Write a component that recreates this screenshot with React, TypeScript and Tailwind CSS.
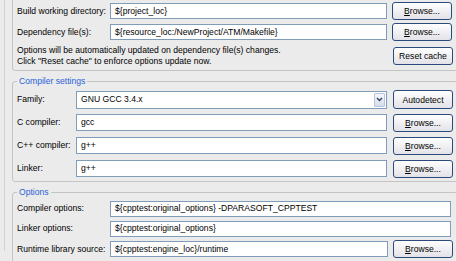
import React from 'react';

const Btn = ({ children, className = '' }: { children: React.ReactNode; className?: string }) => (
  <button
    className={`h-[18px] w-[60px] shrink-0 rounded-[3px] border border-[#2c4b7d] bg-gradient-to-b from-white to-[#e2e2e8] text-center leading-[16px] ${className}`}
  >
    {children}
  </button>
);

const Browse = () => (
  <Btn>
    <span className="underline">B</span>rowse...
  </Btn>
);

const Field = ({ value, className = '' }: { value: string; className?: string }) => (
  <div
    className={`flex h-[16px] shrink-0 items-center border border-[#7f9db9] bg-white pl-[4px] whitespace-nowrap overflow-hidden ${className}`}
  >
    {value}
  </div>
);

const Label = ({ children, w }: { children: React.ReactNode; w: string }) => (
  <span className={`${w} shrink-0 whitespace-nowrap`}>{children}</span>
);

const Group = ({ title, className = '', children }: { title?: string; className?: string; children: React.ReactNode }) => (
  <div className={`relative w-[446px] rounded-[3px] border border-[#c4c4c4] pl-[4px] ${className}`}>
    {title && (
      <span className="absolute -top-[7px] left-[4px] bg-[#ebebeb] px-[2px] leading-[12px] text-[#2a62d8]">
        {title}
      </span>
    )}
    {children}
  </div>
);

export default function App() {
  return (
    <div className="h-[261px] w-[456px] overflow-hidden bg-[#ebebeb] font-['Liberation_Sans',Arial,sans-serif] text-[8.6px] text-black">
      <div className="ml-[4px] h-full border-l border-[#d2d2d2] pl-[7px]">
        {/* Build settings (top cut off) */}
        <Group className="-mt-[10px] pt-[11px] pb-[3px]">
          <div className="flex flex-col gap-[3px]">
            <div className="flex h-[18px] items-center">
              <Label w="w-[93px]">Build working directory:</Label>
              <Field value="${project_loc}" className="w-[277px]" />
              <div className="ml-[5px]"><Browse /></div>
            </div>
            <div className="flex h-[18px] items-center">
              <Label w="w-[93px]">Dependency file(s):</Label>
              <Field value="${resource_loc:/NewProject/ATM/Makefile}" className="w-[277px]" />
              <div className="ml-[5px]"><Browse /></div>
            </div>
            <div className="mt-[1px] flex items-center">
              <div className="w-[375px] shrink-0 whitespace-nowrap leading-[11px]">
                <div>Options will be automatically updated on dependency file(s) changes.</div>
                <div>Click "Reset cache" to enforce options update now.</div>
              </div>
              <div className="ml-[1px]"><Btn>Reset cache</Btn></div>
            </div>
          </div>
        </Group>

        {/* Compiler settings */}
        <Group title="Compiler settings" className="mt-[10px] pt-[8px] pb-[3px]">
          <div className="flex flex-col gap-[4px]">
            <div className="flex h-[19px] items-center">
              <Label w="w-[59px]">Family:</Label>
              <div className="flex h-[18px] w-[311px] shrink-0 items-center border border-[#7f9db9] bg-white pl-[4px]">
                <span className="flex-1">GNU GCC 3.4.x</span>
                <div className="mr-[1px] flex h-[14px] w-[11px] items-center justify-center rounded-[1px] border border-[#b7c4dc] bg-gradient-to-b from-[#f4f6fb] to-[#d4dcec]">
                  <svg width="7" height="5" viewBox="0 0 7 5">
                    <path d="M1 1 L3.5 3.5 L6 1" fill="none" stroke="#2d3d5c" strokeWidth="1.3" />
                  </svg>
                </div>
              </div>
              <div className="ml-[6px]"><Btn className="h-[19px]">Autodetect</Btn></div>
            </div>
            <div className="flex h-[19px] items-center">
              <Label w="w-[59px]">C compiler:</Label>
              <Field value="gcc" className="h-[17px] w-[311px]" />
              <div className="ml-[6px]"><Browse /></div>
            </div>
            <div className="flex h-[19px] items-center">
              <Label w="w-[59px]">C++ compiler:</Label>
              <Field value="g++" className="h-[17px] w-[311px]" />
              <div className="ml-[6px]"><Browse /></div>
            </div>
            <div className="flex h-[19px] items-center">
              <Label w="w-[59px]">Linker:</Label>
              <Field value="g++" className="h-[17px] w-[311px]" />
              <div className="ml-[6px]"><Browse /></div>
            </div>
          </div>
        </Group>

        {/* Options */}
        <Group title="Options" className="mt-[10px] pt-[7px] pb-[4px]">
          <div className="flex flex-col gap-[3px]">
            <div className="flex h-[17px] items-center">
              <Label w="w-[93px]">Compiler options:</Label>
              <Field value="${cpptest:original_options} -DPARASOFT_CPPTEST" className="w-[341px]" />
            </div>
            <div className="flex h-[17px] items-center">
              <Label w="w-[93px]">Linker options:</Label>
              <Field value="${cpptest:original_options}" className="w-[341px]" />
            </div>
            <div className="flex h-[18px] items-center">
              <Label w="w-[93px]">Runtime library source:</Label>
              <Field value="${cpptest:engine_loc}/runtime" className="w-[278px]" />
              <div className="ml-[5px]"><Browse /></div>
            </div>
          </div>
        </Group>
      </div>
    </div>
  );
}
